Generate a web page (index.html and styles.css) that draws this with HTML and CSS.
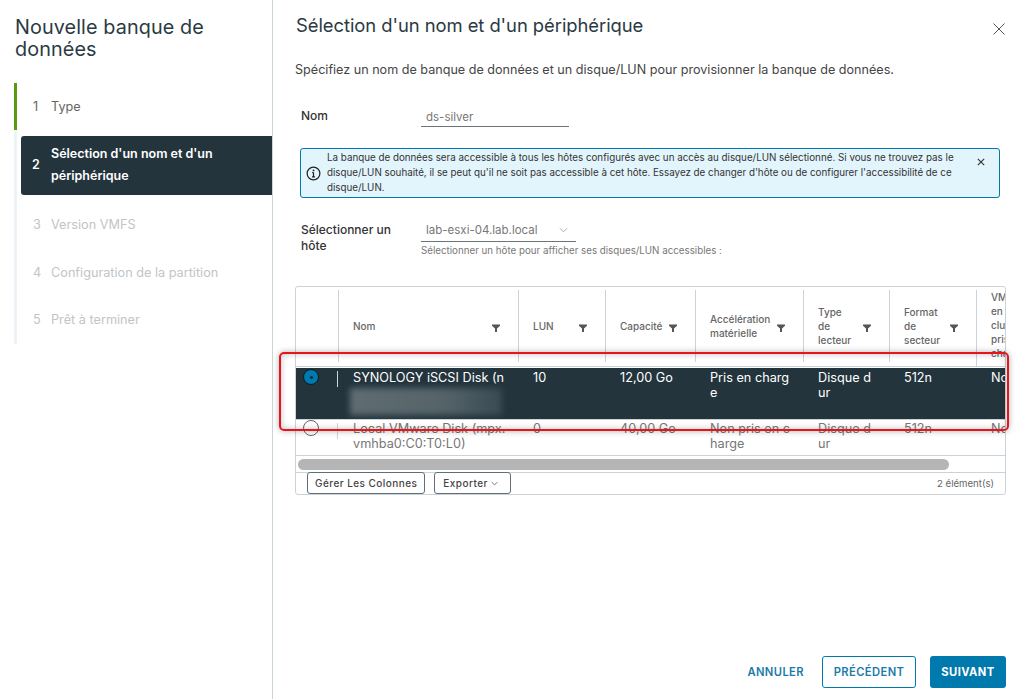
FILE: index.html
```html
<!DOCTYPE html>
<html lang="fr">
<head>
<meta charset="utf-8">
<title>Nouvelle banque de données</title>
<link rel="stylesheet" href="styles.css">
</head>
<body>
<div class="app">
  <aside class="side">
    <h1 class="side-title">Nouvelle banque de données</h1>
    <ol class="steps">
      <li class="step done"><span class="num">1</span><span>Type</span></li>
      <li class="step current"><span class="num">2</span><span>Sélection d'un nom et d'un périphérique</span></li>
      <li class="step off"><span class="num">3</span><span>Version VMFS</span></li>
      <li class="step off"><span class="num">4</span><span>Configuration de la partition</span></li>
      <li class="step off"><span class="num">5</span><span>Prêt à terminer</span></li>
    </ol>
  </aside>
  <main class="main">
    <header class="head">
      <h2 class="title">Sélection d'un nom et d'un périphérique</h2>
      <svg class="close" viewBox="0 0 12 12"><path d="M.5.5l11 11M11.5.5l-11 11"/></svg>
    </header>
    <p class="desc">Spécifiez un nom de banque de données et un disque/LUN pour provisionner la banque de données.</p>
    <div class="field name-field">
      <label class="lab">Nom</label>
      <div class="input">ds-silver</div>
    </div>
    <div class="alert">
      <svg class="info" viewBox="0 0 16 16"><circle cx="8" cy="8" r="6.8"/><path d="M8 7v4.4M6.4 11.6h3.2M6.6 7h1.4"/><circle class="dot" cx="8" cy="4.7" r="1"/></svg>
      <p class="alert-text">La banque de données sera accessible à tous les hôtes configurés avec un accès au disque/LUN sélectionné. Si vous ne trouvez pas le disque/LUN souhaité, il se peut qu'il ne soit pas accessible à cet hôte. Essayez de changer d'hôte ou de configurer l'accessibilité de ce disque/LUN.</p>
      <svg class="alert-close" viewBox="0 0 10 10"><path d="M1 1l8 8M9 1l-8 8"/></svg>
    </div>
    <div class="field host-field">
      <label class="lab">Sélectionner un hôte</label>
      <div class="host-col">
        <div class="select"><span>lab-esxi-04.lab.local</span><svg class="chev" viewBox="0 0 10 6"><path d="M1 1l4 4 4-4"/></svg></div>
        <div class="hint">Sélectionner un hôte pour afficher ses disques/LUN accessibles :</div>
      </div>
    </div>
    <section class="grid">
      <div class="row hrow">
        <div class="hc first"></div>
        <div class="hc"><span>Nom</span><svg class="filter" viewBox="0 0 8 8"><path d="M0 .5h8v1.2L5 4.6V8H3V4.6L0 1.7z"/></svg></div>
        <div class="hc"><span>LUN</span><svg class="filter" viewBox="0 0 8 8"><path d="M0 .5h8v1.2L5 4.6V8H3V4.6L0 1.7z"/></svg></div>
        <div class="hc"><span>Capacité</span><svg class="filter" viewBox="0 0 8 8"><path d="M0 .5h8v1.2L5 4.6V8H3V4.6L0 1.7z"/></svg></div>
        <div class="hc"><span>Accélération matérielle</span><svg class="filter" viewBox="0 0 8 8"><path d="M0 .5h8v1.2L5 4.6V8H3V4.6L0 1.7z"/></svg></div>
        <div class="hc"><span>Type<br>de<br>lecteur</span><svg class="filter" viewBox="0 0 8 8"><path d="M0 .5h8v1.2L5 4.6V8H3V4.6L0 1.7z"/></svg></div>
        <div class="hc"><span>Format<br>de<br>secteur</span><svg class="filter" viewBox="0 0 8 8"><path d="M0 .5h8v1.2L5 4.6V8H3V4.6L0 1.7z"/></svg></div>
        <div class="hc last"><span>VMFS<br>en<br>cluster<br>pris en<br>charge</span></div>
      </div>
      <div class="row drow sel">
        <div class="dc radio-cell"><span class="radio on"></span><span class="tick"></span></div>
        <div class="dc"><span>SYNOLOGY iSCSI Disk (n</span><div class="blur"></div></div>
        <div class="dc">10</div>
        <div class="dc">12,00 Go</div>
        <div class="dc">Pris en charg<br>e</div>
        <div class="dc">Disque d<br>ur</div>
        <div class="dc">512n</div>
        <div class="dc">Non</div>
      </div>
      <div class="row drow plain">
        <div class="dc radio-cell"><span class="radio"></span><span class="tick"></span></div>
        <div class="dc">Local VMware Disk (mpx.<br>vmhba0:C0:T0:L0)</div>
        <div class="dc">0</div>
        <div class="dc">40,00 Go</div>
        <div class="dc">Non pris en c<br>harge</div>
        <div class="dc">Disque d<br>ur</div>
        <div class="dc">512n</div>
        <div class="dc">Non</div>
      </div>
      <div class="scroll"><div class="thumb"></div></div>
      <div class="gfoot">
        <button class="gbtn">Gérer Les Colonnes</button>
        <button class="gbtn export">Exporter<svg class="chev small" viewBox="0 0 10 6"><path d="M1 1l4 4 4-4"/></svg></button>
        <span class="count">2 élément(s)</span>
      </div>
    </section>
    <footer class="actions">
      <button class="btn link">ANNULER</button>
      <button class="btn outline">PRÉCÉDENT</button>
      <button class="btn solid">SUIVANT</button>
    </footer>
  </main>
</div>
<div class="mark"></div>
</body>
</html>
```
FILE: styles.css
```css
* { box-sizing: border-box; }
html, body { margin: 0; height: 100%; }
body { background: #fff; font-family: Inter, "Liberation Sans", sans-serif; color: #333; overflow: hidden; position: relative; }
.app { display: flex; height: 699px; }
p, h1, h2, ol { margin: 0; padding: 0; }

.side { width: 273px; flex: none; border-right: 1px solid #c9d3da; padding: 17px 0 0 15px; }
.side-title { font-size: 19.8px; font-weight: 400; line-height: 21.5px; color: #2b3a42; height: 43px; width: 220px; letter-spacing: .1px; }
.steps { list-style: none; margin: 23px 0 0 -1px; border-left: 3px solid #eef3f7; width: 258px; height: 261px; font-size: 12.7px; }
.step { display: flex; align-items: center; height: 47px; padding-left: 16px; margin-left: -3px; border-left: 3px solid transparent; }
.num { width: 18px; flex: none; }
.done { border-left-color: #5a9a11; color: #666; }
.off { color: #bfc5c9; height: 47.5px; }
.step.current { background: #23343d; color: #fff; font-weight: 600; margin: 6px 0 6px 4px; height: 59px; border-left: 0; padding: 0 10px 2px 11px; border-radius: 3px 0 0 3px; line-height: 22px; font-size: 12.5px; width: 251px; }
.current .num { width: 19px; }

.main { flex: 1; min-width: 0; padding: 0 17px 0 22px; display: flex; flex-direction: column; }
.head { display: flex; justify-content: space-between; padding-top: 14px; height: 51px; padding-left: 1px; }
.title { font-size: 18.4px; font-weight: 400; color: #2b3a42; line-height: 22px; letter-spacing: -.05px; }
.close { width: 12px; height: 12px; margin: 9px 1px 0 0; fill: none; stroke: #555; stroke-width: 1; }
.desc { font-size: 12.6px; line-height: 16px; margin-top: 11px; color: #454545; }

.field { display: flex; margin-left: 6px; }
.lab { width: 120px; flex: none; font-size: 12px; font-weight: 500; color: #333; line-height: 16px; }
.name-field { margin-top: 29px; height: 26px; }
.name-field .lab { padding-top: 1px; }
.input { width: 148px; height: 20px; border-bottom: 1px solid #6b7479; padding-left: 5px; font-size: 11.5px; color: #777; line-height: 20px; }

.alert { margin: 15px 6px 0 5px; width: 700px; height: 50px; background: #e3f5fc; border: 1px solid #0079ad; border-radius: 3px; display: flex; align-items: center; position: relative; }
.info { width: 15px; height: 15px; flex: none; margin-left: 5px; fill: none; stroke: #222; stroke-width: 1.3; }
.info .dot { fill: #222; stroke: none; }
.alert-text { font-size: 9.8px; line-height: 14.7px; color: #333; margin-left: 6px; width: 634px; padding-top: 1px; }
.alert-close { width: 8px; height: 8px; flex: none; margin: -23px 0 0 16px; fill: none; stroke: #333; stroke-width: 1.4; }

.host-field { margin-top: 24px; height: 64px; }
.host-field .lab { width: 120px; padding-right: 20px; line-height: 16px; }
.select { width: 155px; height: 20px; border-bottom: 1px solid #6b7479; padding: 0 8px 4px 5px; display: flex; justify-content: space-between; align-items: center; font-size: 11.5px; color: #777; }
.chev { width: 9px; height: 6px; fill: none; stroke: #9aa3a8; stroke-width: 1; }
.hint { font-size: 9.75px; line-height: 13px; color: #777; margin-top: 2px; }

.grid { width: 711px; height: 209px; border: 1px solid #ccd3d8; border-radius: 3px; overflow: hidden; flex: none; }
.row { display: grid; grid-template-columns: 42px 180px 87px 90px 108px 86px 87px 30px; }
.hrow { height: 80px; border-bottom: 1px solid #ccd3d8; font-size: 10px; font-weight: 500; color: #666; line-height: 14px; margin-bottom: 1px; }
.hc { border-left: 1px solid #ccd3d8; margin: 3px 0 4px; padding: 0 18px 0 14px; display: flex; align-items: center; justify-content: space-between; min-width: 0; }
.hc.first { border-left: 0; }
.hc.last { padding-right: 0; white-space: nowrap; overflow: hidden; align-items: flex-start; margin-bottom: 0; }
.filter { width: 8px; height: 8px; fill: #555; flex: none; margin-top: 3px; }

.drow { font-size: 12.7px; line-height: 15px; }
.dc { padding: 2px 0 0 15px; white-space: nowrap; overflow: hidden; min-width: 0; }
.sel { height: 51px; background: #23343d; color: #fff; font-weight: 400; }
.plain { height: 37px; border-top: 1px solid #ccd3d8; border-bottom: 1px solid #ccd3d8; color: #777; line-height: 14.5px; }
.plain .dc { padding-top: 2px; }
.dc.radio-cell { padding: 0; display: block; position: relative; overflow: visible; }
.radio { display: block; width: 16px; height: 16px; border-radius: 50%; border: 1px solid #666; background: #fff; margin: 0 0 0 7px; }
.radio.on { background: #0079ad; border-color: #0d1c24; position: relative; margin-top: 1px; }
.radio.on::after { content: ""; display: block; width: 3px; height: 3px; background: #102a38; border-radius: 50%; margin: 5.5px 0 0 5.5px; }
.tick { display: block; position: absolute; right: 0; top: 3px; width: 1px; height: 16px; background: #cfd6da; }
.blur { width: 152px; height: 27px; margin: 3px 0 0 -3px; background: linear-gradient(90deg, #5f6c72, #56646a 60%, #3a4a52); filter: blur(3px); }

.scroll { height: 17px; padding: 3px 2px 0; border-bottom: 1px solid #ccd3d8; }
.thumb { width: 651px; height: 11px; background: #b5b5b5; border-radius: 6px; }
.gfoot { display: flex; align-items: center; height: 21px; padding: 0 11px; gap: 9px; }
.gbtn { height: 22px; margin-top: -1px; background: #fff; border: 1px solid #5f6e77; border-radius: 3px; font: 500 10px Inter, "Liberation Sans", sans-serif; color: #444; padding: 0 7px; letter-spacing: .45px; display: flex; align-items: center; gap: 3px; }
.export { width: 77px; padding-left: 8px; }
.chev.small { width: 7px; height: 5px; stroke: #444; }
.count { margin-left: auto; font-size: 9.6px; color: #666; }

.actions { margin-top: auto; display: flex; align-items: center; justify-content: flex-end; height: 32px; margin-bottom: 11px; gap: 14px; width: 711px; }
.btn { height: 32px; font: 600 11.2px Inter, "Liberation Sans", sans-serif; letter-spacing: .4px; border-radius: 3px; cursor: pointer; padding: 0; }
.link { background: none; border: 0; color: #1b7ba8; margin-right: 4px; }
.outline { width: 94px; background: #fff; border: 1px solid #0079ad; color: #1b7ba8; }
.solid { width: 76px; background: #0079ad; border: 0; color: #fff; font-weight: 700; }

.mark { position: absolute; left: 279px; top: 352px; width: 730px; height: 79px; border: 2px solid #e8141c; border-radius: 5px; box-shadow: 0 0 6px rgba(0,0,0,.3), inset 0 0 6px rgba(0,0,0,.25); pointer-events: none; }
```
